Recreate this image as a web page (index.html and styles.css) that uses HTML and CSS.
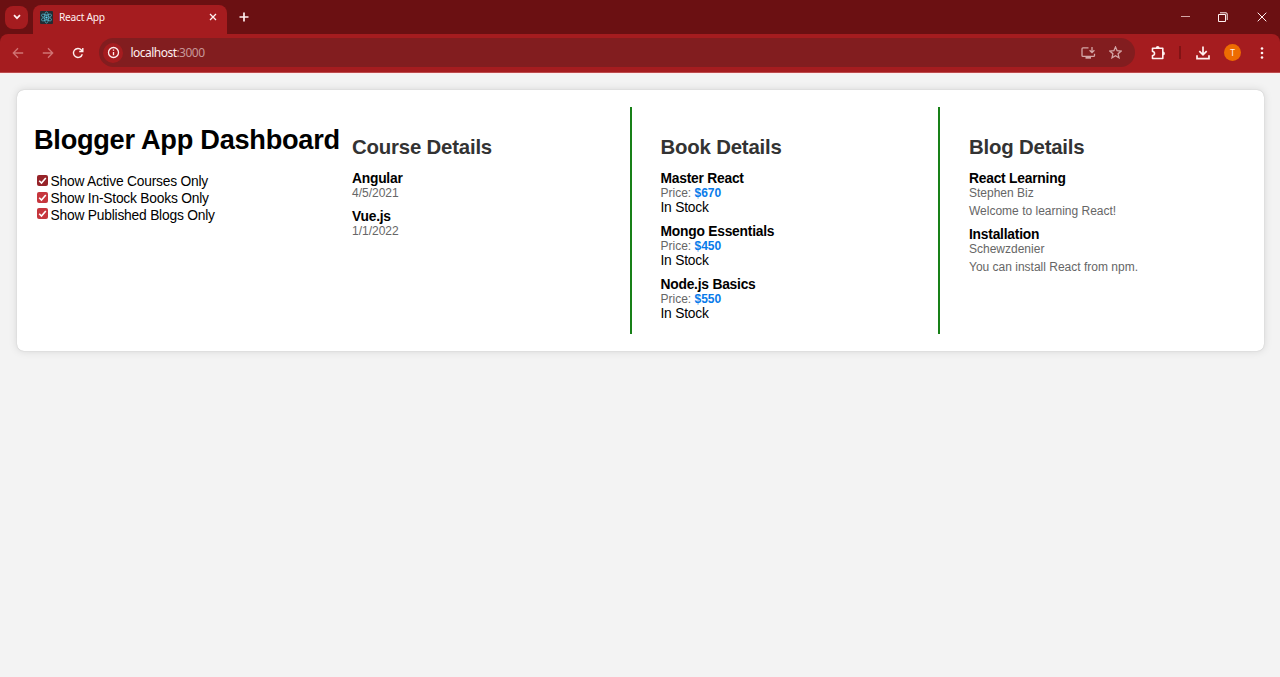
FILE: index.html
```html
<!DOCTYPE html>
<html lang="en">
<head>
<meta charset="utf-8">
<title>React App</title>
<link rel="stylesheet" href="styles.css">
</head>
<body>
<header class="browser">
  <div class="tabstrip">
    <div class="tab-search"><svg width="8" height="6" viewBox="0 0 8 6"><path d="M1 1.2 4 4.2 7 1.2" class="line bold"/></svg></div>
    <div class="tab">
      <svg class="favicon" width="13" height="13" viewBox="0 0 13 13"><rect width="13" height="13" rx="1" fill="#222c33"/><g fill="none" stroke="#56b5cc" stroke-width=".75"><ellipse cx="6.5" cy="6.5" rx="5.6" ry="2.1" transform="rotate(30 6.5 6.5)"/><ellipse cx="6.5" cy="6.5" rx="5.6" ry="2.1" transform="rotate(90 6.5 6.5)"/><ellipse cx="6.5" cy="6.5" rx="5.6" ry="2.1" transform="rotate(150 6.5 6.5)"/></g><circle cx="6.5" cy="6.5" r="1.1" fill="#61dafb"/></svg>
      <span class="tab-title">React App</span>
      <svg class="tab-close" width="8" height="8" viewBox="0 0 8 8"><path d="M1 1 7 7M7 1 1 7" class="line"/></svg>
    </div>
    <svg class="new-tab" width="10" height="10" viewBox="0 0 10 10"><path d="M5 .5V9.5M.5 5H9.5" class="line bold"/></svg>
    <div class="window-controls">
      <svg width="9" height="10" viewBox="0 0 9 10"><path d="M0 4.5H9" class="line dim thin"/></svg>
      <svg width="10" height="10" viewBox="0 0 10 10"><path d="M.5 2.5H7.5V9.5H.5ZM2 .8H8Q9.2.8 9.2 2V8" class="line thin"/></svg>
      <svg width="10" height="10" viewBox="0 0 10 10"><path d="M.7.7 9.3 9.3M9.3.7.7 9.3" class="line thin"/></svg>
    </div>
  </div>
  <div class="toolbar">
    <div class="navigation">
      <svg width="12" height="12" viewBox="0 0 12 12"><path d="M11.2 6H1.5M6 1.3 1.3 6 6 10.7" class="line muted"/></svg>
      <svg width="12" height="12" viewBox="0 0 12 12"><path d="M.8 6H10.5M6 1.3 10.7 6 6 10.7" class="line muted"/></svg>
      <svg width="12" height="12" viewBox="0 0 12 12"><path d="M10.3 7.2A4.5 4.5 0 1 1 9.4 3L10.6 4.3M10.8 1V4.5H7.2" class="line reload"/></svg>
    </div>
    <div class="address">
      <div class="site-info"><svg width="13" height="13" viewBox="0 0 13 13"><circle cx="6.5" cy="6.5" r="5" class="line"/><path d="M6.5 6V9.2M6.5 3.6V4.8" class="line"/></svg></div>
      <span class="url">localhost<span class="port">:3000</span></span>
      <svg class="install" width="15" height="14" viewBox="0 0 15 14"><path d="M7.5 1.8H2Q1 1.8 1 2.8V9.4Q1 10.4 2 10.4H12.5Q13.5 10.4 13.5 9.4V7.8M11 1V6.3M8.6 4.3 11 6.7 13.4 4.3" class="line dim"/><path d="M4.5 11H10V12.7H4.5Z" fill="#d4a6a6"/></svg>
      <svg width="13" height="13" viewBox="0 0 13 13"><path d="M6.5 1 8.1 4.7 12.1 5.1 9.1 7.8 10 11.8 6.5 9.7 3 11.8 3.9 7.8.9 5.1 4.9 4.7Z" class="line dim"/></svg>
    </div>
    <div class="actions">
      <svg width="16" height="16" viewBox="0 0 16 16"><path d="M2.5 3.3H12.8V13.5H2.5V10.5A2 2 0 0 0 2.5 6.5Z" class="line puzzle"/><path d="M5.8 3A1.9 1.9 0 0 1 9.6 3ZM13 6.5A1.9 1.9 0 0 1 13 10.3Z" fill="#fff0f0"/></svg>
      <span class="separator"></span>
      <svg width="14" height="14" viewBox="0 0 14 14"><path d="M7 .5V8.7M3.3 5.2 7 8.9 10.7 5.2M1 9.3V12.6H13V9.3" class="line bold"/></svg>
      <span class="avatar">T</span>
      <svg class="more" width="4" height="12" viewBox="0 0 4 12"><g fill="#fff4f4"><circle cx="2" cy="1.5" r="1.3"/><circle cx="2" cy="6" r="1.3"/><circle cx="2" cy="10.5" r="1.3"/></g></svg>
    </div>
  </div>
</header>
<main class="dashboard">
  <section class="filters">
    <h1>Blogger App Dashboard</h1>
    <label class="filter"><span class="check active"><svg width="11" height="11" viewBox="0 0 11 11"><path d="M2.2 5.7 4.5 8 8.8 3" class="line tick"/></svg></span>Show Active Courses Only</label>
    <label class="filter"><span class="check"><svg width="11" height="11" viewBox="0 0 11 11"><path d="M2.2 5.7 4.5 8 8.8 3" class="line tick"/></svg></span>Show In-Stock Books Only</label>
    <label class="filter"><span class="check"><svg width="11" height="11" viewBox="0 0 11 11"><path d="M2.2 5.7 4.5 8 8.8 3" class="line tick"/></svg></span>Show Published Blogs Only</label>
  </section>
  <section class="column">
    <h2>Course Details</h2>
    <article><h3>Angular</h3><div class="meta">4/5/2021</div></article>
    <article><h3>Vue.js</h3><div class="meta">1/1/2022</div></article>
  </section>
  <section class="column divided">
    <h2>Book Details</h2>
    <article><h3>Master React</h3><div class="meta">Price: <b class="price">$670</b></div><div class="stock">In Stock</div></article>
    <article><h3>Mongo Essentials</h3><div class="meta">Price: <b class="price">$450</b></div><div class="stock">In Stock</div></article>
    <article><h3>Node.js Basics</h3><div class="meta">Price: <b class="price">$550</b></div><div class="stock">In Stock</div></article>
  </section>
  <section class="column divided">
    <h2>Blog Details</h2>
    <article><h3>React Learning</h3><div class="meta">Stephen Biz</div><p>Welcome to learning React!</p></article>
    <article><h3>Installation</h3><div class="meta">Schewzdenier</div><p>You can install React from npm.</p></article>
  </section>
</main>
</body>
</html>
```
FILE: styles.css
```css
* { box-sizing: border-box; }
body { margin: 0; height: 677px; overflow: hidden; background: #f3f3f3; color: #000; font-family: "Liberation Sans", Arial, sans-serif; }
svg { display: block; flex: none; }
.line { fill: none; stroke: #fff0f0; stroke-width: 1.3; }
.line.bold { stroke-width: 1.7; }
.line.thin { stroke-width: 1; }
.line.reload { stroke-width: 1.4; }
.line.puzzle { stroke-width: 1.6; stroke-linejoin: round; }
.line.dim { stroke: #d4a6a6; }
.line.muted { stroke: #d17474; }
.line.tick { stroke: #fff; stroke-width: 1.6; }

.browser { height: 74px; background: #6b1012; border-bottom: 1px solid #fdeeee; font-family: "Noto Sans", sans-serif; color: #fff0f0; }
.tabstrip { height: 34px; display: flex; align-items: center; padding-left: 5px; }
.tab-search { width: 23px; height: 23px; border-radius: 8px; background: #a51c1f; display: flex; align-items: center; justify-content: center; }
.tab { width: 194px; height: 29px; align-self: flex-end; margin-left: 5px; padding: 0 10px 5px 7px; border-radius: 8px 8px 0 0; background: #a51c1f; display: flex; align-items: center; }
.tab-title { margin-left: 6px; font-size: 10.2px; letter-spacing: -.25px; }
.tab-close { margin-left: auto; }
.new-tab { margin-left: 12px; }
.window-controls { margin-left: auto; display: flex; align-items: center; gap: 28px; padding-right: 13px; }
.window-controls svg:nth-child(2) { margin-right: 1px; }
.toolbar { height: 39px; display: flex; align-items: center; padding-bottom: 1px; background: #a51c1f; border-radius: 8px 8px 0 0; border-bottom: 1px solid #bd4b4d; }
.navigation { display: flex; gap: 18px; margin-left: 12px; }
.address { width: 1036px; height: 29px; margin-left: 15px; border-radius: 15px; background: #821d1f; display: flex; align-items: center; padding: 0 13px 0 4px; }
.site-info { width: 20px; height: 20px; border-radius: 50%; background: #a51c1f; display: flex; align-items: center; justify-content: center; }
.url { margin-left: 7.5px; font-size: 12px; letter-spacing: -.53px; }
.port { color: #c79798; }
.install { margin-left: auto; margin-right: 13px; }
.actions { display: flex; align-items: center; margin-left: 15px; }
.separator { width: 2px; height: 13px; background: #821315; margin: 0 15px 0 13px; }
.avatar { width: 17px; height: 17px; border-radius: 50%; background: #ed6c02; margin: 0 19px 0 14px; display: flex; align-items: center; justify-content: center; font-size: 8.5px; }

.dashboard { display: flex; margin: 16px 16px 0 17px; height: 261px; padding: 17px; background: #fff; border-radius: 7px; box-shadow: 0 0 8.5px rgba(0, 0, 0, .13), 0 0 1px rgba(0, 0, 0, .25); }
.filters { width: 318px; }
h1 { margin: 17px 0 19.2px; font-size: 27.2px; line-height: 31px; letter-spacing: -.28px; white-space: nowrap; }
.filter { display: flex; align-items: center; height: 16.7px; padding-left: 3px; font-size: 13.8px; line-height: 16.7px; letter-spacing: -.21px; }
.check { width: 11px; height: 11px; margin: -4px 2.5px 0 0; border-radius: 2px; background: #c6363d; }
.check.active { background: #962329; }
.column { width: 278px; padding-top: 28.5px; }
.column.divided { width: 308.5px; padding-left: 28.5px; border-left: 2px solid #188018; }
.column.divided:last-child { margin-left: -.5px; padding-left: 29px; }
h2 { margin: 0 0 12.2px; font-size: 20.4px; line-height: 23px; letter-spacing: -.2px; color: #333; }
article { margin-bottom: 8.5px; }
h3 { margin: 0; font-size: 13.8px; line-height: 16px; letter-spacing: -.22px; }
.meta, p { font-size: 12px; line-height: 13.6px; color: #666; }
.price { color: #087bea; }
.stock { font-size: 13.8px; line-height: 15px; letter-spacing: -.21px; }
p { margin: 4.5px 0 0; }
```
